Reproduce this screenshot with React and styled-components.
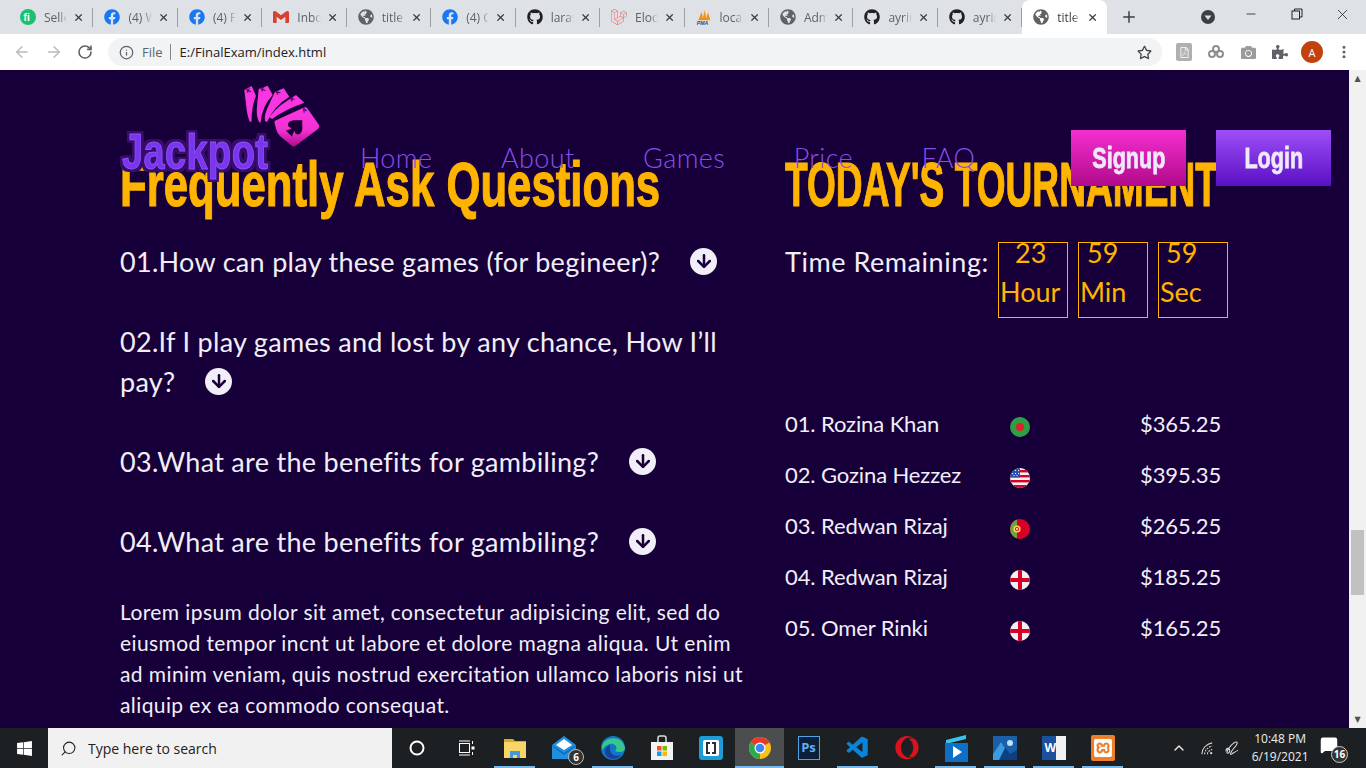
import React from 'react';
import styled, { createGlobalStyle } from 'styled-components';
import { FaFacebook, FaGithub, FaGlobeAmericas, FaPuzzlePiece, FaCamera, FaRegStar, FaOpera, FaWindows, FaRegFilePdf } from 'react-icons/fa';
import { SiGmail, SiLaravel, SiXampp } from 'react-icons/si';
import { VscVscode } from 'react-icons/vsc';
import { ArrowLeft, ArrowRight, RotateCw, Info, X, Plus, Minus, MoreVertical, Search, ChevronUp, MessageSquare, ArrowDown } from 'lucide-react';

const GlobalStyle = createGlobalStyle`
  html, body { margin: 0; padding: 0; height: 100%; overflow: hidden; }
  body { font-family: Lato, "Noto Sans", sans-serif; }
  * { box-sizing: border-box; }
`;

const tabs = [
  { title: 'Seller', icon: <FiverrIcon /> },
  { title: '(4) W', icon: <FaFacebook color="#1877f2" /> },
  { title: '(4) F', icon: <FaFacebook color="#1877f2" /> },
  { title: 'Inbox', icon: <SiGmail color="#d8402f" /> },
  { title: 'title', icon: <FaGlobeAmericas color="#5f6368" /> },
  { title: '(4) C', icon: <FaFacebook color="#1877f2" /> },
  { title: 'larav', icon: <FaGithub color="#202124" /> },
  { title: 'Eloq', icon: <SiLaravel color="#f0635c" /> },
  { title: 'local', icon: <PmaIcon /> },
  { title: 'Adm', icon: <FaGlobeAmericas color="#5f6368" /> },
  { title: 'ayrin', icon: <FaGithub color="#202124" /> },
  { title: 'ayrin', icon: <FaGithub color="#202124" /> },
  { title: 'title', icon: <FaGlobeAmericas color="#5f6368" />, active: true },
];

const navLinks = ['Home', 'About', 'Games', 'Price', 'FAQ'];

const questions = [
  '01.How can play these games (for begineer)?',
  '02.If I play games and lost by any chance, How I’ll pay?',
  '03.What are the benefits for gambiling?',
  '04.What are the benefits for gambiling?',
];

const timers = [
  { value: '23', unit: 'Hour', offset: 15 },
  { value: '59', unit: 'Min', offset: 7 },
  { value: '59', unit: 'Sec', offset: 6 },
];

const players = [
  { name: '01. Rozina Khan', flag: 'bd', prize: '$365.25' },
  { name: '02. Gozina Hezzez', flag: 'us', prize: '$395.35' },
  { name: '03. Redwan Rizaj', flag: 'pt', prize: '$265.25' },
  { name: '04. Redwan Rizaj', flag: 'en', prize: '$185.25' },
  { name: '05. Omer Rinki', flag: 'en', prize: '$165.25' },
];

function FiverrIcon() {
  return (
    <svg viewBox="0 0 16 16" width="16" height="16">
      <circle cx="8" cy="8" r="8" fill="#1dbf73" />
      <text x="3.6" y="12" fontSize="10" fontWeight="700" fill="#fff" fontFamily="Liberation Sans">fi</text>
    </svg>
  );
}

function PmaIcon() {
  return (
    <svg viewBox="0 0 20 20" width="18" height="18">
      <path d="M3 14 L7 3 L9 14 Z M8 14 L11 1 L13 14 Z M12 14 L15 4 L18 14 Z" fill="#f29111" />
      <text x="1" y="19.5" fontSize="6.5" fontWeight="700" fontStyle="italic" fill="#2b4a8b" fontFamily="Liberation Sans">PMA</text>
    </svg>
  );
}

function Flag({ code }) {
  return (
    <svg viewBox="0 0 20 20" width="20" height="20">
      <defs><clipPath id={`clip-${code}`}><circle cx="10" cy="10" r="10" /></clipPath></defs>
      <g clipPath={`url(#clip-${code})`}>
        {code === 'bd' && (
          <>
            <rect width="20" height="20" fill="#2f9e44" />
            <circle cx="10" cy="10" r="4" fill="#e0202a" />
          </>
        )}
        {code === 'us' && (
          <>
            <rect width="20" height="20" fill="#f0f0f0" />
            <rect y="2" width="20" height="2.4" fill="#d80027" />
            <rect y="7" width="20" height="2.4" fill="#d80027" />
            <rect y="12" width="20" height="2.4" fill="#d80027" />
            <rect y="17" width="20" height="3" fill="#d80027" />
            <rect width="10" height="9.5" fill="#2b52a8" />
            <path d="M2 2h1v1H2zM5 2h1v1H5zM8 2h1v1H8zM2 5h1v1H2zM5 5h1v1H5zM8 5h1v1H8zM3.5 7h1v1h-1zM6.5 7h1v1h-1z" fill="#f0f0f0" />
          </>
        )}
        {code === 'pt' && (
          <>
            <rect width="20" height="20" fill="#d80027" />
            <rect width="7" height="20" fill="#6da544" />
            <circle cx="7" cy="10" r="3.6" fill="#ffda44" />
            <circle cx="7" cy="10" r="2" fill="#d80027" />
            <rect x="6.2" y="9" width="1.6" height="2" fill="#f0f0f0" />
          </>
        )}
        {code === 'en' && (
          <>
            <rect width="20" height="20" fill="#f0f0f0" />
            <rect x="8" width="4" height="20" fill="#d80027" />
            <rect y="8" width="20" height="4" fill="#d80027" />
          </>
        )}
      </g>
    </svg>
  );
}

function CardsLogo() {
  return (
    <CardsSvg viewBox="0 0 78 66" width="78" height="66">
      <defs>
        <linearGradient id="cardGrad" x1="0" y1="0" x2="0" y2="1">
          <stop offset="0" stopColor="#fb37e4" />
          <stop offset="0.6" stopColor="#f22fd0" />
          <stop offset="1" stopColor="#ad0a8c" />
        </linearGradient>
      </defs>
      <path d="M0.3 6 L7.7 2 L12 12 Q7.500 22 7.500 37.500 L6 38 Q3 32 2 20 Z" fill="#f935e0" />
      <path d="M14.700 5 L23.700 1.700 L28.700 11 Q18 22 16.500 38.700 L15 38 Q12 32 13 22 Z" fill="#f935e0" />
      <path d="M31 7.700 L39.700 4.300 L45.300 12.700 Q30 22 23 38 L21 37 Q20 32 23 25 Z" fill="#f935e0" />
      <path d="M47 14.300 L52 11 L60.300 18.700 Q40 26 28 35 L25.300 33 Q30 27 37 21 Z" fill="#f935e0" />
      <path d="M31.500 36.500 L60 23.500 Q62 22.500 63.500 24.500 L75 41 Q76 43.500 74 45 L52 61.500 Q49.500 63.500 47.500 61.500 L36 52 Q33 49 32.500 46 L30.500 39 Q30 37 31.500 36.500 Z" fill="url(#cardGrad)" />
      <path d="M0 -9 C3 -5 8 -3 8 2 C8 5.5 4 6 2 4 C2.5 6.5 3 8 4.5 10 H-4.5 C-3 8 -2.5 6.500 -2 4 C-4 6 -8 5.500 -8 2 C-8 -3 -3 -5 0 -9 Z" fill="#1a0036" transform="translate(52 42.500) rotate(45)" />
      <g fontFamily="Liberation Sans" fontWeight="700" fill="#1a0036" fontSize="6">
        <text x="3" y="9" transform="rotate(-15 3 9)">K</text>
        <text x="17.500" y="8" transform="rotate(-20 17.500 8)">K</text>
        <text x="33" y="11" transform="rotate(-30 33 11)">K</text>
        <text x="47.500" y="18" transform="rotate(-40 47.500 18)">A</text>
        <text x="59.500" y="29" transform="rotate(-30 59.500 29)">A</text>
      </g>
    </CardsSvg>
  );
}

function App() {
  return (
    <>
      <GlobalStyle />
      <Screen>
        <TabStrip>
          {tabs.map((tab, i) => (
            <Tab key={i} $active={tab.active}>
              <TabIcon>{tab.icon}</TabIcon>
              <TabTitle $active={tab.active}>{tab.title}</TabTitle>
              <X size={13} strokeWidth={2.6} color="#3c4043" />
            </Tab>
          ))}
          <NewTab><Plus size={18} strokeWidth={2} color="#3c4043" /></NewTab>
          <TabSearch><ChevronDot /></TabSearch>
          <WindowControls>
            <WindowButton><Minus size={14} strokeWidth={1.4} color="#222" /></WindowButton>
            <WindowButton><RestoreIcon /></WindowButton>
            <WindowButton><X size={17} strokeWidth={1.1} color="#222" /></WindowButton>
          </WindowControls>
        </TabStrip>

        <Toolbar>
          <NavButtons>
            <ArrowLeft size={18} color="#b9bbbe" />
            <ArrowRight size={18} color="#b9bbbe" />
            <RotateCw size={16} strokeWidth={2.4} color="#5f6368" />
          </NavButtons>
          <Omnibox>
            <Info size={15} color="#5f6368" />
            <FileLabel>File</FileLabel>
            <Divider />
            <Url>E:/FinalExam/index.html</Url>
            <StarSlot><FaRegStar size={15} color="#3c4043" /></StarSlot>
          </Omnibox>
          <Extensions>
            <ExtSlot><ExtBox><FaRegFilePdf size={11} color="#eee" /></ExtBox></ExtSlot>
            <ExtSlot><Rings /></ExtSlot>
            <ExtSlot><FaCamera size={15} color="#9b9b9b" /></ExtSlot>
            <ExtSlot><FaPuzzlePiece size={16} color="#5f6368" /></ExtSlot>
            <ExtSlot><Avatar>A</Avatar></ExtSlot>
            <ExtSlot><MoreVertical size={16} strokeWidth={2.6} color="#5f6368" /></ExtSlot>
          </Extensions>
        </Toolbar>

        <Viewport>
          <Page>
            <Header>
              <Logo>
                <CardsLogo />
                <LogoText>Jackpot</LogoText>
              </Logo>
              <NavMenu>
                {navLinks.map((link) => <NavLink key={link}>{link}</NavLink>)}
              </NavMenu>
              <HeaderButton $from="#f52ed0" $to="#b00a8a"><ButtonLabel>Signup</ButtonLabel></HeaderButton>
              <HeaderButton $from="#9d4ef7" $to="#5a10c4"><ButtonLabel>Login</ButtonLabel></HeaderButton>
            </Header>

            <Columns>
              <FaqColumn>
                <Heading $squeeze={0.694}>Frequently Ask Questions</Heading>
                {questions.map((q) => (
                  <Question key={q}>
                    {q}
                    <ArrowBadge><ArrowDown size={20} strokeWidth={3} color="#17003a" /></ArrowBadge>
                  </Question>
                ))}
                <Lorem>
                  Lorem ipsum dolor sit amet, consectetur adipisicing elit, sed do eiusmod tempor incnt ut labore et dolore magna aliqua. Ut enim ad minim veniam, quis nostrud exercitation ullamco laboris nisi ut aliquip ex ea commodo consequat.
                </Lorem>
              </FaqColumn>
              <TournamentColumn>
                <Heading $squeeze={0.589}>TODAY'S TOURNAMENT</Heading>
                <TimerRow>
                  <TimerLabel>Time Remaining:</TimerLabel>
                  {timers.map((t) => (
                    <TimerBox key={t.unit}>
                      <TimerValue $offset={t.offset}>{t.value}</TimerValue>
                      <TimerUnit>{t.unit}</TimerUnit>
                    </TimerBox>
                  ))}
                </TimerRow>
                <Players>
                  {players.map((p) => (
                    <Player key={p.name}>
                      <span>{p.name}</span>
                      <FlagSlot><Flag code={p.flag} /></FlagSlot>
                      <span>{p.prize}</span>
                    </Player>
                  ))}
                </Players>
              </TournamentColumn>
            </Columns>
          </Page>
          <Scrollbar>
            <ScrollArrow>▲</ScrollArrow>
            <ScrollTrack><ScrollThumb /></ScrollTrack>
            <ScrollArrow>▼</ScrollArrow>
          </Scrollbar>
        </Viewport>

        <Taskbar>
          <StartButton><FaWindows size={17} color="#fff" /></StartButton>
          <SearchBox>
            <SearchGlass size={17} strokeWidth={1.5} color="#222" />
            <span>Type here to search</span>
          </SearchBox>
          <TaskIcon><Cortana /></TaskIcon>
          <TaskIcon><TaskView /></TaskIcon>
          <TaskIcon $open><Folder /></TaskIcon>
          <TaskIcon><MailIcon /><CountBadge>6</CountBadge></TaskIcon>
          <TaskIcon $open><EdgeIcon /></TaskIcon>
          <TaskIcon><StoreIcon /></TaskIcon>
          <TaskIcon><Brackets /></TaskIcon>
          <TaskIcon $open $current><ChromeIcon /></TaskIcon>
          <TaskIcon><PsIcon>Ps</PsIcon></TaskIcon>
          <TaskIcon $open><VscVscode size={26} color="#0a84d8" /></TaskIcon>
          <TaskIcon><FaOpera size={24} color="#d9121f" /></TaskIcon>
          <TaskIcon $open><VideoIcon /></TaskIcon>
          <TaskIcon $open><PhotosIcon /></TaskIcon>
          <TaskIcon $open><WordIcon>W</WordIcon></TaskIcon>
          <TaskIcon $open><XamppBox><SiXampp size={18} color="#fff" /></XamppBox></TaskIcon>
          <Tray>
            <ChevronUp size={16} color="#eee" />
            <SignalIcon />
            <ScribbleIcon />
            <Clock>
              <span>10:48 PM</span>
              <span>6/19/2021</span>
            </Clock>
            <Notify>
              <MessageSquare size={18} fill="#fff" color="#fff" />
              <NotifyCount>16</NotifyCount>
            </Notify>
          </Tray>
        </Taskbar>
      </Screen>
    </>
  );
}

function ChevronDot() {
  return (
    <svg viewBox="0 0 16 16" width="16" height="16">
      <circle cx="8" cy="8" r="7" fill="#3c4043" />
      <path d="M4.500 6.500h7L8 11z" fill="#dee1e6" />
    </svg>
  );
}

function RestoreIcon() {
  return (
    <svg viewBox="0 0 12 12" width="12" height="12" fill="none" stroke="#222" strokeWidth="1">
      <rect x="1" y="3" width="7.500" height="8" />
      <path d="M3.500 3V1H11v8H8.500" />
    </svg>
  );
}

function Rings() {
  return (
    <svg viewBox="0 0 18 18" width="18" height="18" fill="none" stroke="#8f8f8f" strokeWidth="2">
      <circle cx="5" cy="11" r="3" />
      <circle cx="13" cy="11" r="3" />
      <circle cx="9" cy="6" r="3" />
    </svg>
  );
}

function SignalIcon() {
  return (
    <svg viewBox="0 0 16 16" width="15" height="15" fill="none" stroke="#ddd" strokeWidth="1.100">
      <path d="M3 14 C3 8 8 3 14 2" />
      <path d="M6 14 C6 10 10 6 14 5.500" strokeDasharray="2 1" />
      <path d="M9 14 C9 12 11 10 14 9" strokeDasharray="2 1" />
      <circle cx="13" cy="13" r="1.200" fill="#ddd" stroke="none" />
    </svg>
  );
}

function ScribbleIcon() {
  return (
    <svg viewBox="0 0 16 16" width="15" height="15" fill="none" stroke="#ddd" strokeWidth="1.100">
      <path d="M1 11 C1 7 5 7 5 10 C5 13 2 14 2 12 C3 8 9 1 12 1 C14 1 13 4 10 7 L7 11 C6 13 5 15 7 14 C9 13 11 11 14 10" />
    </svg>
  );
}

function Cortana() {
  return (
    <svg viewBox="0 0 16 16" width="16" height="16" fill="none" stroke="#fff" strokeWidth="2">
      <circle cx="8" cy="8" r="6.500" />
    </svg>
  );
}

function TaskView() {
  return (
    <svg viewBox="0 0 18 18" width="18" height="18" fill="none" stroke="#fff" strokeWidth="1">
      <rect x="2.500" y="4.500" width="10" height="9" />
      <path d="M2 2h11M2 16h11M15.500 2v3M15.500 13v3" />
      <rect x="15" y="8" width="2" height="2" fill="#fff" />
    </svg>
  );
}

function Folder() {
  return (
    <svg viewBox="0 0 24 24" width="24" height="24">
      <path d="M1 3h9l2 2h11v3H1z" fill="#e0a72b" />
      <rect x="1" y="6" width="22" height="16" fill="#f8d568" />
      <path d="M7 22v-7h10v7h-3v-3h-4v3z" fill="#3f9ade" />
    </svg>
  );
}

function MailIcon() {
  return (
    <svg viewBox="0 0 26 26" width="26" height="26">
      <path d="M1 10 L13 1 L25 10 V24 H1 Z" fill="#1f8fe0" />
      <path d="M5 10 L13 4 L21 10 L13 15 Z" fill="#fff" />
      <path d="M1 10 L13 18 L25 10 V11 L13 20 L1 11 Z" fill="#1268b3" />
    </svg>
  );
}

function EdgeIcon() {
  return (
    <svg viewBox="0 0 26 26" width="26" height="26">
      <circle cx="13" cy="13" r="12" fill="#0f78c9" />
      <path d="M2 11 C4 2 22 -1 25 13 C25 17 19 18 15 16 C19 12 14 8 10 9 C6 10 4 12 2 15 Z" fill="#38c78a" />
      <path d="M10 14 C10 19 15 22 21 20 C18 25 8 26 5 18 C4 15 7 11 10 10 Z" fill="#1a3f9c" />
    </svg>
  );
}

function StoreIcon() {
  return (
    <svg viewBox="0 0 24 26" width="24" height="26">
      <path d="M8 7 V3 Q8 1 10 1 H14 Q16 1 16 3 V7" fill="none" stroke="#ddd" strokeWidth="1.500" />
      <rect x="1" y="7" width="22" height="18" fill="#f3f3f3" />
      <rect x="7" y="11" width="4.500" height="4.500" fill="#f25022" />
      <rect x="12.500" y="11" width="4.500" height="4.500" fill="#7fba00" />
      <rect x="7" y="16.500" width="4.500" height="4.500" fill="#00a4ef" />
      <rect x="12.500" y="16.500" width="4.500" height="4.500" fill="#ffb900" />
    </svg>
  );
}

function Brackets() {
  return (
    <svg viewBox="0 0 24 24" width="24" height="24">
      <rect width="24" height="24" rx="3" fill="#1e9cd7" />
      <rect x="4" y="4" width="16" height="16" rx="2" fill="#fff" />
      <path d="M11 7H8v10h3M13 7h3v10h-3" fill="none" stroke="#25313a" strokeWidth="2" />
    </svg>
  );
}

function ChromeIcon() {
  return (
    <svg viewBox="0 0 24 24" width="24" height="24">
      <circle cx="12" cy="12" r="11" fill="#fbc116" />
      <path d="M12 12 L2.500 6.500 A11 11 0 0 1 21.500 6.500 Z" fill="#e33b2e" />
      <path d="M12 12 L2.500 6.500 A11 11 0 0 0 12 23 Z" fill="#2da94f" />
      <circle cx="12" cy="12" r="5.500" fill="#fff" />
      <circle cx="12" cy="12" r="4.300" fill="#3f86f0" />
    </svg>
  );
}

function VideoIcon() {
  return (
    <svg viewBox="0 0 24 28" width="24" height="28">
      <path d="M2 6 L22 1 V5 L2 10 Z" fill="#37c5ee" />
      <rect x="1" y="9" width="23" height="19" fill="#0f6fc6" />
      <path d="M9 12 L18 18 L9 24 Z" fill="#fff" />
    </svg>
  );
}

function PhotosIcon() {
  return (
    <svg viewBox="0 0 24 24" width="24" height="24">
      <rect width="24" height="24" fill="#1a5fa8" />
      <circle cx="17" cy="7" r="3" fill="#bfe2f8" />
      <path d="M0 18 L8 6 L17 18 L24 14 V24 H0 Z" fill="#0e3f80" />
      <path d="M0 18 L8 6 L12 12 L6 24 H0 Z" fill="#3b9be0" />
    </svg>
  );
}

const Screen = styled.div`
  width: 1366px;
  height: 768px;
  display: flex;
  flex-direction: column;
  overflow: hidden;
`;

const TabStrip = styled.div`
  height: 34px;
  flex: none;
  display: flex;
  align-items: flex-end;
  padding-left: 9px;
  background: #dee1e6;
`;

const Tab = styled.div`
  width: 84.45px;
  height: 34px;
  flex: none;
  display: flex;
  align-items: center;
  padding: 0 9px 0 11px;
  background: ${(p) => (p.$active ? '#fff' : 'transparent')};
  border-radius: ${(p) => (p.$active ? '8px 8px 0 0' : '0')};
  position: relative;
  &::after {
    content: '';
    display: ${(p) => (p.$active ? 'none' : 'block')};
    position: absolute;
    right: 0;
    top: 8px;
    height: 19px;
    width: 1px;
    background: #9aa0a6;
  }
`;

const TabIcon = styled.span`
  width: 16px;
  height: 16px;
  flex: none;
  display: flex;
  align-items: center;
  justify-content: center;
  font-size: 16px;
`;

const TabTitle = styled.span`
  width: 27px;
  margin: 0 6px 0 8px;
  overflow: hidden;
  white-space: nowrap;
  font: 12px "Open Sans", sans-serif;
  color: ${(p) => (p.$active ? '#3c4043' : '#5f6368')};
  mask-image: linear-gradient(90deg, #000 65%, transparent);
`;

const NewTab = styled.div`
  width: 44px;
  height: 34px;
  display: flex;
  align-items: center;
  justify-content: center;
`;

const TabSearch = styled.div`
  margin-left: 49px;
  height: 34px;
  display: flex;
  align-items: center;
`;

const WindowControls = styled.div`
  margin-left: 12px;
  height: 34px;
  padding-bottom: 6px;
  display: flex;
`;

const WindowButton = styled.span`
  width: 46px;
  display: flex;
  align-items: center;
  justify-content: center;
`;

const Toolbar = styled.div`
  height: 36px;
  flex: none;
  display: flex;
  align-items: center;
  background: #fff;
`;

const NavButtons = styled.div`
  width: 108px;
  display: flex;
  align-items: center;
  gap: 14px;
  padding-left: 13px;
`;

const Omnibox = styled.div`
  width: 1054px;
  height: 28px;
  display: flex;
  align-items: center;
  padding: 0 10px 0 11px;
  background: #f1f3f4;
  border-radius: 14px;
`;

const FileLabel = styled.span`
  margin-left: 8px;
  font: 13px "Open Sans", sans-serif;
  color: #5f6368;
`;

const Divider = styled.span`
  width: 1px;
  height: 16px;
  margin: 0 9px 0 7px;
  background: #80868b;
`;

const Url = styled.span`
  font: 13px "Open Sans", sans-serif;
  color: #202124;
`;

const StarSlot = styled.span`
  margin-left: auto;
  display: flex;
`;

const Extensions = styled.div`
  display: flex;
  align-items: center;
  padding-left: 6px;
`;

const ExtSlot = styled.span`
  width: 32px;
  display: flex;
  align-items: center;
  justify-content: center;
`;

const ExtBox = styled.span`
  width: 16px;
  height: 18px;
  border-radius: 2px;
  background: #b0b0b0;
  display: flex;
  align-items: center;
  justify-content: center;
`;

const Avatar = styled.span`
  width: 22px;
  height: 22px;
  border-radius: 50%;
  background: #c2410c;
  color: #fff;
  font: 11px "Open Sans", sans-serif;
  display: flex;
  align-items: center;
  justify-content: center;
`;

const Viewport = styled.div`
  flex: 1;
  min-height: 0;
  display: flex;
`;

const Page = styled.main`
  flex: 1;
  min-width: 0;
  position: relative;
  overflow: hidden;
  background: #17003a;
`;

const Header = styled.header`
  position: absolute;
  top: 0;
  left: 0;
  right: 0;
  height: 120px;
  padding: 60px 0 0 122px;
  display: flex;
  align-items: flex-start;
  z-index: 2;
`;

const Logo = styled.div`
  width: 238px;
  height: 46px;
  flex: none;
  position: relative;
`;

const CardsSvg = styled.svg`
  position: absolute;
  left: 122px;
  top: -46px;
`;

const LogoText = styled.div`
  position: relative;
  font: 700 50px/44px "Liberation Sans", sans-serif;
  color: #7a35f0;
  letter-spacing: 0.5px;
  -webkit-text-stroke: 1px #8e55f5;
  text-shadow: 0 0 3px #3a0f6e, 0 0 4px #3a0f6e, 0 3px 0 #3a0f6e, 4px 0 0 #3a0f6e, -4px 0 0 #3a0f6e, 0 -3px 0 #3a0f6e, 4px 3px 0 #3a0f6e, -4px 3px 0 #3a0f6e, 4px -3px 0 #3a0f6e, -4px -3px 0 #3a0f6e;
  transform: scaleX(0.76);
  transform-origin: left;
`;

const NavMenu = styled.nav`
  display: flex;
  flex: none;
  gap: 68.5px;
  width: 711px;
  padding-top: 10px;
`;

const NavLink = styled.a`
  font: 300 27px/36px Lato, sans-serif;
  letter-spacing: 0.4px;
  color: #8450e6;
`;

const HeaderButton = styled.button`
  width: 115px;
  height: 56px;
  border: 0;
  padding: 0;
  flex: none;
  background: linear-gradient(${(p) => p.$from}, ${(p) => p.$to});
  & + & {
    margin-left: 30px;
  }
`;

const ButtonLabel = styled.span`
  display: inline-block;
  color: #efe9f9;
  font: 700 30px/56px "Liberation Sans", sans-serif;
  -webkit-text-stroke: 0.8px #efe9f9;
  transform: scaleX(0.72);
`;

const Columns = styled.div`
  display: flex;
  padding: 78px 0 0 120px;
`;

const FaqColumn = styled.section`
  width: 665px;
  padding-right: 40px;
`;

const TournamentColumn = styled.section`
  flex: 1;
`;

const Heading = styled.h2`
  margin: 0 0 22px;
  height: 72px;
  font: 700 63px/72px "Liberation Sans", sans-serif;
  color: #ffb400;
  -webkit-text-stroke: 1.2px #ffb400;
  white-space: nowrap;
  transform: scaleX(${(p) => p.$squeeze});
  transform-origin: left;
`;

const Question = styled.p`
  margin: 0 0 40px;
  font: 400 27px/40px Lato, sans-serif;
  letter-spacing: 0.3px;
  color: #f1eef8;
`;

const ArrowBadge = styled.span`
  display: inline-flex;
  width: 27px;
  height: 27px;
  margin-left: 30px;
  vertical-align: 1px;
  border-radius: 50%;
  background: #f1eef8;
  align-items: center;
  justify-content: center;
`;

const Lorem = styled.p`
  margin: -6px 0 0;
  font: 400 21px/31px Lato, sans-serif;
  letter-spacing: 0.4px;
  color: #f1eef8;
`;

const TimerRow = styled.div`
  display: flex;
  align-items: flex-start;
  gap: 10px;
`;

const TimerLabel = styled.div`
  width: 203px;
  font: 400 27px/40px Lato, sans-serif;
  letter-spacing: 0.55px;
  white-space: nowrap;
  color: #f1eef8;
`;

const TimerBox = styled.div`
  width: 70px;
  height: 76px;
  padding-left: 1px;
  border: 1px solid #ffb400;
  color: #ffb400;
`;

const TimerValue = styled.div`
  padding-left: ${(p) => p.$offset}px;
  font: 400 27px/20px Lato, sans-serif;
`;

const TimerUnit = styled.div`
  margin-top: 9px;
  font: 400 27px/40px Lato, sans-serif;
`;

const Players = styled.div`
  margin-top: 91px;
  width: 440px;
  display: flex;
  flex-direction: column;
  gap: 21px;
`;

const Player = styled.div`
  display: grid;
  grid-template-columns: 225px 130px 1fr;
  align-items: center;
  height: 30px;
  font: 400 22px/30px Lato, sans-serif;
  letter-spacing: -0.1px;
  color: #f1eef8;
`;

const FlagSlot = styled.span`
  display: flex;
  padding-top: 5px;
`;

const Scrollbar = styled.aside`
  width: 17px;
  flex: none;
  display: flex;
  flex-direction: column;
  background: #f1f1f1;
`;

const ScrollArrow = styled.div`
  height: 17px;
  flex: none;
  font: 8px/17px "DejaVu Sans", sans-serif;
  text-align: center;
  color: #505050;
`;

const ScrollTrack = styled.div`
  flex: 1;
  padding: 443px 2px 0;
`;

const ScrollThumb = styled.div`
  height: 65px;
  background: #c1c1c1;
`;

const Taskbar = styled.footer`
  height: 40px;
  flex: none;
  display: flex;
  align-items: stretch;
  background: #1d2022;
`;

const StartButton = styled.div`
  width: 48px;
  display: flex;
  align-items: center;
  justify-content: center;
`;

const SearchBox = styled.div`
  width: 344px;
  display: flex;
  align-items: center;
  gap: 11px;
  padding-left: 12px;
  background: #f1f1f1;
  font: 14px "Open Sans", sans-serif;
  color: #222;
`;

const SearchGlass = styled(Search)`
  transform: scaleX(-1);
`;

const TaskIcon = styled.div`
  width: 49px;
  display: flex;
  align-items: center;
  justify-content: center;
  position: relative;
  background: ${(p) => (p.$current ? '#4b4d4f' : 'transparent')};
  &::after {
    content: '';
    display: ${(p) => (p.$open ? 'block' : 'none')};
    position: absolute;
    left: ${(p) => (p.$current ? '0' : '4px')};
    right: ${(p) => (p.$current ? '0' : '4px')};
    bottom: 0;
    height: 2px;
    background: #76b9ed;
  }
`;

const CountBadge = styled.span`
  position: absolute;
  right: 4px;
  bottom: 3px;
  width: 16px;
  height: 16px;
  border-radius: 50%;
  border: 1px solid #bbb;
  background: #333;
  color: #fff;
  font: 700 10px/14px "Open Sans", sans-serif;
  text-align: center;
`;

const PsIcon = styled.span`
  width: 22px;
  height: 24px;
  border: 1.5px solid #4ea3ea;
  background: #0b1e3a;
  color: #5fb1f5;
  font: 700 13px/21px "Open Sans", sans-serif;
  text-align: center;
`;

const WordIcon = styled.span`
  width: 24px;
  height: 24px;
  background: linear-gradient(90deg, #1c4f9c 60%, #f2f2f2 60%);
  color: #fff;
  font: 700 12px/24px "Open Sans", sans-serif;
  padding-left: 3px;
`;

const XamppBox = styled.span`
  width: 24px;
  height: 26px;
  border-radius: 2px;
  background: #ef7e2a;
  display: flex;
  align-items: center;
  justify-content: center;
`;

const Tray = styled.div`
  margin-left: auto;
  display: flex;
  align-items: center;
  gap: 11.5px;
  padding-right: 20px;
`;

const Clock = styled.div`
  display: flex;
  flex-direction: column;
  align-items: center;
  font: 12px/18px "Open Sans", sans-serif;
  color: #eee;
`;

const Notify = styled.div`
  position: relative;
  width: 26px;
  height: 30px;
  display: flex;
  align-items: flex-start;
  padding-top: 3px;
`;

const NotifyCount = styled.span`
  position: absolute;
  right: -2px;
  bottom: 0;
  width: 17px;
  height: 17px;
  border-radius: 50%;
  border: 1px solid #ccc;
  background: #333;
  color: #fff;
  font: 700 10px/15px "Open Sans", sans-serif;
  text-align: center;
`;

export default App;
